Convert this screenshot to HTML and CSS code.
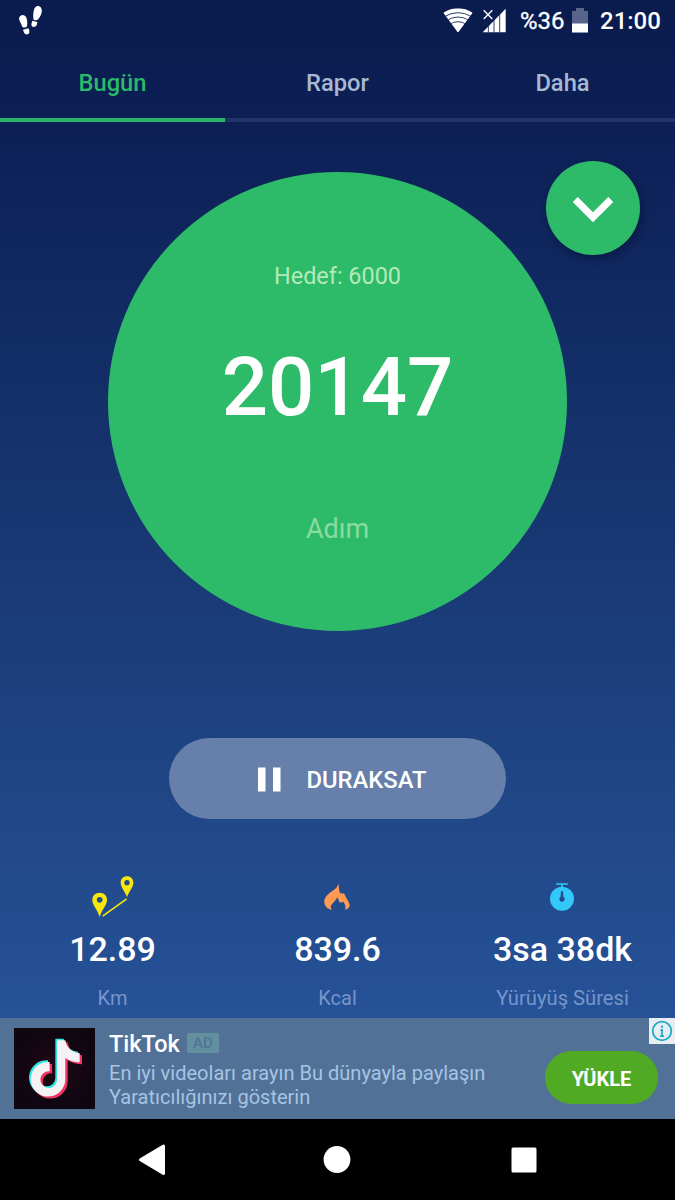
FILE: index.html
```html
<!DOCTYPE html>
<html lang="tr">
<head>
<meta charset="utf-8">
<title>Adımsayar</title>
<link rel="stylesheet" href="styles.css">
</head>
<body>
<div class="screen">
  <header class="status">
    <svg class="status-steps" width="24" height="32" viewBox="0 0 72 96" fill="#fff">
      <path d="M12 30C20 28 26 35 27 45C28 55 29 59 26 65Q20 70 13 66C10 56 3 48 3 40Q4 32 12 30Z"/>
      <path d="M15 74L31 70Q36 76 34 83Q31 90 23 88Q17 84 15 74Z"/>
      <path d="M61 3C69 4 73 13 71 22C70 31 64 37 61 43Q54 48 47 44C45 37 45 25 48 14Q52 2 61 3Z"/>
      <path d="M43 47L58 51Q58 60 53 64Q46 69 41 63Q39 56 43 47Z"/>
    </svg>
    <div class="status-right">
      <svg width="30" height="25" viewBox="0 0 90 75">
        <defs><clipPath id="fan"><path d="M1 14Q45 -12 89 14L47 71Q45 74 43 71Z"/></clipPath></defs>
        <g clip-path="url(#fan)">
          <rect width="90" height="75" fill="#fff"/>
          <g fill="none" stroke="#0b1d4f" stroke-width="2.600">
            <path d="M4 26Q45 2 86 26"/><path d="M10 38Q45 16 80 38"/><path d="M18 50Q45 32 72 50"/>
          </g>
        </g>
      </svg>
      <svg class="signal" width="25" height="25" viewBox="0 0 75 75">
        <path d="M2 73L71 2V73Z" fill="#fff"/>
        <path d="M19 40V73M36 25V73M53 10V73" stroke="#0b1d4f" stroke-width="2.500"/>
        <path d="M0 0H35V36L24 47L0 36Z" fill="#0b1d4f"/>
        <path d="M5 7L31 33M31 7L5 33" stroke="#fff" stroke-width="4"/>
      </svg>
      <span class="percent">%36</span>
      <svg class="battery" width="16" height="25" viewBox="0 0 16 25">
        <path d="M0 3H4V0H12V3H16V25H0Z" fill="#59648a"/>
        <path d="M0 15.500H16V24.300H0Z" fill="#fff"/>
      </svg>
      <span class="clock">21:00</span>
    </div>
  </header>
  <nav class="tabs">
    <div class="tab tab-active">Bugün</div>
    <div class="tab">Rapor</div>
    <div class="tab">Daha</div>
  </nav>
  <main class="main">
    <button class="expand" aria-label="Aç">
      <svg width="40" height="26" viewBox="0 0 40 26"><path d="M2.300 2.500L20 20.200L37.700 2.500" fill="none" stroke="#fff" stroke-width="7"/></svg>
    </button>
    <section class="dial">
      <div class="goal">Hedef: 6000</div>
      <div class="steps">20147</div>
      <div class="unit">Adım</div>
    </section>
    <button class="pause">
      <svg width="23" height="25" viewBox="0 0 23 25" fill="#fff"><path d="M0 .500H7.500V24.500H0ZM15 .500H22.500V24.500H15Z"/></svg>
      <span>DURAKSAT</span>
    </button>
    <section class="stats">
      <div class="stat">
        <svg width="42" height="42" viewBox="0 0 126 126">
          <g fill="#f7e70c" fill-rule="evenodd">
            <path d="M23 50C36 50 45 59 45 72C45 87 29 102 23 123C17 102 1 87 1 72C1 59 10 50 23 50ZM23 63A8.500 8.500 0 1 0 23 80A8.500 8.500 0 1 0 23 63Z"/>
            <path d="M105 1C116 1 124 9 124 20C124 34 110 47 105 64C100 47 86 34 86 20C86 9 94 1 105 1ZM105 12A8 8 0 1 0 105 28A8 8 0 1 0 105 12Z"/>
          </g>
          <path d="M34 119L102 70" stroke="#f7e70c" stroke-width="5" stroke-linecap="round"/>
        </svg>
        <div class="value">12.89</div><div class="label">Km</div>
      </div>
      <div class="stat">
        <svg width="28" height="42" viewBox="0 0 84 126">
          <path d="M43 23C46 34 44 42 48 51L56 53L60 51C63 62 75 75 77 88Q77 98 63 101Q67 89 58 77L47 80L40 63C38 72 28 78 22 87Q18 95 24 102C6 99 -2 85 2 70C7 49 39 44 43 23Z" fill="#ff9a52"/>
        </svg>
        <div class="value">839.6</div><div class="label">Kcal</div>
      </div>
      <div class="stat">
        <svg width="28" height="42" viewBox="0 0 84 126">
          <path d="M23 24H55M39 24V36" stroke="#32c8fa" stroke-width="5" stroke-linecap="round"/>
          <circle cx="39" cy="68" r="36" fill="#32c8fa"/>
          <path d="M36 46H42L43 62A8 8 0 1 1 35 62Z" fill="#234a8b"/>
        </svg>
        <div class="value">3sa 38dk</div><div class="label label-time">Yürüyüş Süresi</div>
      </div>
    </section>
  </main>
  <aside class="ad">
    <svg class="ad-logo" width="81" height="81" viewBox="0 0 243 243">
      <defs>
        <radialGradient id="plum"><stop offset="0" stop-color="#210713"/><stop offset="1" stop-color="#0e0611"/></radialGradient>
        <path id="note" d="M129 37H154C157 57 171 73 197 76V103C181 103 167 99 154 90V154A52 52 0 1 1 107 102V130A25 25 0 1 0 129 155Z"/>
      </defs>
      <rect width="243" height="243" fill="url(#plum)"/>
      <use href="#note" x="7" y="6" fill="#f23462"/>
      <use href="#note" x="-5" y="-5" fill="#2ee8e2"/>
      <use href="#note" fill="#f5f1f4"/>
    </svg>
    <div class="ad-copy">
      <div class="ad-head"><span class="ad-title">TikTok</span><span class="ad-tag">AD</span></div>
      <div class="ad-text">En iyi videoları arayın Bu dünyayla paylaşın<br>Yaratıcılığınızı gösterin</div>
    </div>
    <button class="install">YÜKLE</button>
    <div class="ad-info">
      <svg width="26" height="26" viewBox="0 0 26 26" fill="none" stroke="#20a9cd">
        <circle cx="13" cy="13" r="9.300" stroke-width="1.800"/>
        <path d="M13 7.500V10M11.500 12H13V18M11 18.200H15" stroke-width="1.800"/>
      </svg>
    </div>
  </aside>
  <footer class="navbar">
    <svg width="30" height="34" viewBox="0 0 30 34"><path d="M2.500 16.700L25.500 3V30.500Z" fill="#fff" stroke="#fff" stroke-width="3" stroke-linejoin="round"/></svg>
    <svg class="nav-home" width="28" height="28" viewBox="0 0 28 28"><circle cx="14" cy="13.500" r="13.400" fill="#fff"/></svg>
    <svg width="26" height="26" viewBox="0 0 26 26"><rect x=".500" y=".500" width="25" height="25" rx="1.500" fill="#fff"/></svg>
  </footer>
</div>
</body>
</html>
```
FILE: styles.css
```css
* { box-sizing: border-box; }
body { margin: 0; font-family: Roboto, sans-serif; color: #fff; }
button { border: 0; padding: 0; font: inherit; color: inherit; }
svg { display: block; flex: none; }

.screen {
  width: 675px;
  height: 1200px;
  display: flex;
  flex-direction: column;
  overflow: hidden;
  background: linear-gradient(#0a1b4d 0, #0c2056 130px, #1d417e 700px, #265298 1018px);
}

.status {
  height: 42px;
  padding: 4px 14px 0 18px;
  display: flex;
  justify-content: space-between;
  align-items: flex-start;
}
.status-steps { margin-top: 1px; }
.status-right { display: flex; padding-top: 4px; font-size: 24px; line-height: 27px; font-weight: 500; }
.signal { margin-left: 9px; }
.percent { margin-left: 13px; width: 45px; font-weight: 400; -webkit-text-stroke: .3px #fff; }
.battery { margin-left: 7px; }
.clock { margin-left: 12px; width: 61px; }

.tabs { height: 80px; display: grid; grid-template-columns: repeat(3, 1fr); }
.tab {
  border-bottom: 4px solid #20336a;
  text-align: center;
  font-size: 23.700px;
  font-weight: 500;
  line-height: 83px;
  height: 80px;
  color: #a8b8d3;
}
.tab-active { color: #2cb96a; border-color: #2cb46c; }

.main { height: 896px; position: relative; display: flex; flex-direction: column; align-items: center; }
.expand {
  position: absolute;
  right: 35px;
  top: 39px;
  width: 94px;
  height: 94px;
  border-radius: 50%;
  background: #2dbb69;
  box-shadow: 2px 4px 8px rgba(0, 8, 40, .45);
  display: grid;
  place-items: center;
  padding-top: 4px;
}
.dial {
  margin-top: 49.500px;
  width: 459px;
  height: 459px;
  border-radius: 50%;
  background: #2dbb69;
  display: flex;
  flex-direction: column;
  align-items: center;
  padding-top: 89px;
}
.goal { font-size: 23.400px; line-height: 30px; color: #b5eab9; }
.steps { margin-top: 46px; font-size: 81.500px; line-height: 100px; font-weight: 500; }
.unit { margin-top: 75px; font-size: 27px; line-height: 34px; color: #89dba0; }

.pause {
  margin-top: 107.500px;
  width: 337px;
  height: 81px;
  flex: none;
  border-radius: 41px;
  background: #6680ab;
  display: flex;
  align-items: center;
  justify-content: center;
  gap: 25px;
  padding: 2px 0 0 10px;
  font-size: 23.800px;
  font-weight: 500;
}

.stats { margin-top: 57px; width: 100%; display: grid; grid-template-columns: repeat(3, 1fr); }
.stat { display: flex; flex-direction: column; align-items: center; }
.value { margin-top: 10px; font-size: 34px; line-height: 42px; font-weight: 500; }
.label { margin-top: 14px; font-size: 20px; line-height: 28px; color: #7596cb; }
.label-time { font-size: 20.200px; }

.ad {
  height: 101px;
  flex: none;
  position: relative;
  display: flex;
  align-items: center;
  padding: 0 17px 0 14px;
  background: #517197;
}
.ad-copy { margin-left: 14px; flex: 1; }
.ad-head { display: flex; align-items: center; gap: 7px; height: 30px; }
.ad-title { font-size: 23.500px; font-weight: 500; padding-top: 1px; }
.ad-tag {
  width: 32px;
  height: 20px;
  margin-top: -2px;
  border-radius: 2px;
  background: #6390a0;
  color: #4f7693;
  font-size: 15px;
  line-height: 21px;
  font-weight: 500;
  text-align: center;
}
.ad-text { font-size: 20.050px; line-height: 24px; color: #a6c4e4; white-space: nowrap; padding-top: 2px; }
.install {
  width: 113px;
  height: 53px;
  margin-top: 18px;
  border-radius: 27px;
  background: #50aa23;
  font-size: 20px;
  font-weight: 700;
  padding-top: 2px;
}
.ad-info { position: absolute; right: 0; top: 0; width: 26px; height: 26px; background: #e8edf2; }

.navbar {
  height: 81px;
  flex: none;
  background: #000;
  display: flex;
  justify-content: space-between;
  align-items: center;
  padding: 0 138px;
}
.nav-home { margin-left: -6px; }
```
